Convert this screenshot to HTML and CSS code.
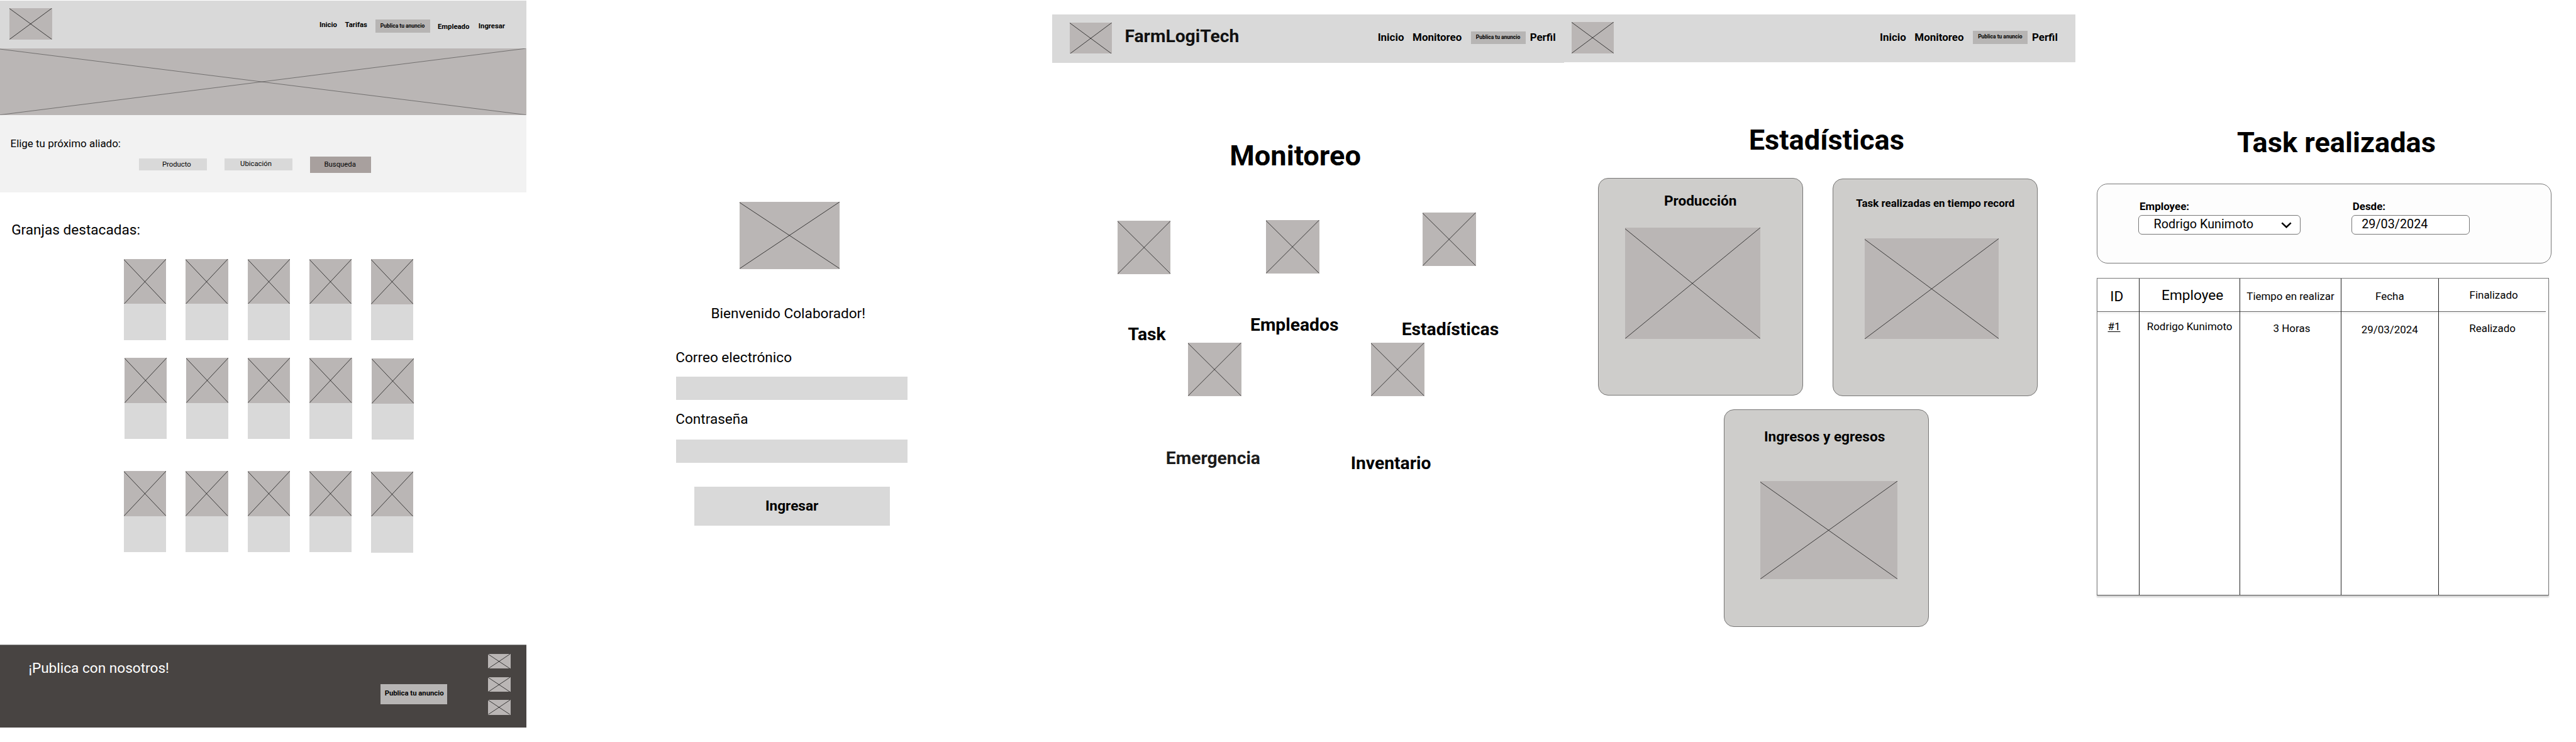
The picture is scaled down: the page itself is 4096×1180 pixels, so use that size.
FILE: index.html
```html
<!DOCTYPE html>
<html lang="es">
<head>
<meta charset="utf-8">
<title>FarmLogiTech</title>
<link rel="stylesheet" href="styles.css">
</head>
<body>
<svg class="defs" aria-hidden="true">
  <symbol id="cross" viewBox="0 0 100 100" preserveAspectRatio="none">
    <path class="cross-line" d="M0 1L100 100M0 100L100 0"/>
  </symbol>
</svg>
<main class="board">

  <section class="frame home">
    <header class="home-header">
      <svg class="ph home-logo"><use href="#cross"/></svg>
      <nav class="home-nav">
        <a class="n-inicio">Inicio</a>
        <a class="n-tarifas">Tarifas</a>
        <a class="publish">Publica tu anuncio</a>
        <a class="n-empleado">Empleado</a>
        <a class="n-ingresar">Ingresar</a>
      </nav>
    </header>
    <svg class="ph hero"><use href="#cross"/></svg>
    <div class="search">
      <p class="search-title">Elige tu próximo aliado:</p>
      <div class="search-row">
        <div class="chip producto">Producto</div>
        <div class="chip ubicacion">Ubicación</div>
        <div class="chip-button">Busqueda</div>
      </div>
    </div>
    <h2 class="farms-title">Granjas destacadas:</h2>
    <div class="farms">
      <div class="farm-row">
        <article class="farm"><svg class="ph"><use href="#cross"/></svg></article>
        <article class="farm"><svg class="ph"><use href="#cross"/></svg></article>
        <article class="farm"><svg class="ph"><use href="#cross"/></svg></article>
        <article class="farm"><svg class="ph"><use href="#cross"/></svg></article>
        <article class="farm"><svg class="ph"><use href="#cross"/></svg></article>
      </div>
      <div class="farm-row second">
        <article class="farm"><svg class="ph"><use href="#cross"/></svg></article>
        <article class="farm"><svg class="ph"><use href="#cross"/></svg></article>
        <article class="farm"><svg class="ph"><use href="#cross"/></svg></article>
        <article class="farm"><svg class="ph"><use href="#cross"/></svg></article>
        <article class="farm"><svg class="ph"><use href="#cross"/></svg></article>
      </div>
      <div class="farm-row third">
        <article class="farm"><svg class="ph"><use href="#cross"/></svg></article>
        <article class="farm"><svg class="ph"><use href="#cross"/></svg></article>
        <article class="farm"><svg class="ph"><use href="#cross"/></svg></article>
        <article class="farm"><svg class="ph"><use href="#cross"/></svg></article>
        <article class="farm"><svg class="ph"><use href="#cross"/></svg></article>
      </div>
    </div>
    <footer class="footer">
      <p class="footer-title">¡Publica con nosotros!</p>
      <div class="footer-button">Publica tu anuncio</div>
      <div class="socials">
        <svg class="ph"><use href="#cross"/></svg>
        <svg class="ph"><use href="#cross"/></svg>
        <svg class="ph"><use href="#cross"/></svg>
      </div>
    </footer>
  </section>

  <section class="frame login">
    <svg class="ph login-image"><use href="#cross"/></svg>
    <p class="welcome">Bienvenido Colaborador!</p>
    <div class="login-form">
      <p class="field-label">Correo electrónico</p>
      <div class="field"></div>
      <p class="field-label password">Contraseña</p>
      <div class="field"></div>
      <div class="login-button">Ingresar</div>
    </div>
  </section>

  <section class="frame monitor">
    <header class="app-header">
      <svg class="ph app-logo"><use href="#cross"/></svg>
      <span class="brand">FarmLogiTech</span>
      <nav class="app-nav">
        <a class="a-inicio">Inicio</a>
        <a class="a-monitoreo">Monitoreo</a>
        <a class="publish">Publica tu anuncio</a>
        <a class="a-perfil">Perfil</a>
      </nav>
    </header>
    <h1 class="monitor-title">Monitoreo</h1>
    <div class="tiles">
      <div class="tile task"><svg class="ph"><use href="#cross"/></svg><span>Task</span></div>
      <div class="tile empleados"><svg class="ph"><use href="#cross"/></svg><span>Empleados</span></div>
      <div class="tile estadisticas"><svg class="ph"><use href="#cross"/></svg><span>Estadísticas</span></div>
    </div>
    <div class="tiles lower">
      <div class="tile emergencia"><svg class="ph"><use href="#cross"/></svg><span>Emergencia</span></div>
      <div class="tile inventario"><svg class="ph"><use href="#cross"/></svg><span>Inventario</span></div>
    </div>
  </section>

  <section class="frame stats">
    <header class="app-header">
      <svg class="ph app-logo"><use href="#cross"/></svg>
      <nav class="app-nav">
        <a class="a-inicio">Inicio</a>
        <a class="a-monitoreo">Monitoreo</a>
        <a class="publish">Publica tu anuncio</a>
        <a class="a-perfil">Perfil</a>
      </nav>
    </header>
    <h1 class="stats-title">Estadísticas</h1>
    <div class="cards">
      <article class="card produccion"><h3>Producción</h3><svg class="ph"><use href="#cross"/></svg></article>
      <article class="card record"><h3>Task realizadas en tiempo record</h3><svg class="ph"><use href="#cross"/></svg></article>
    </div>
    <article class="card ingresos"><h3>Ingresos y egresos</h3><svg class="ph"><use href="#cross"/></svg></article>
  </section>

  <section class="frame tasks">
    <h1 class="tasks-title">Task realizadas</h1>
    <div class="filters">
      <div class="filter">
        <span class="filter-label">Employee:</span>
        <div class="select">Rodrigo Kunimoto
          <svg class="chevron" viewBox="0 0 17 10"><path d="M1.3 1.3L8.5 8.2L15.7 1.3"/></svg>
        </div>
      </div>
      <div class="filter">
        <span class="filter-label">Desde:</span>
        <div class="date">29/03/2024</div>
      </div>
    </div>
    <div class="table">
      <div class="col"><div class="th th-id">ID</div><div class="td td-id">#1</div></div>
      <div class="col"><div class="th th-employee">Employee</div><div class="td">Rodrigo Kunimoto</div></div>
      <div class="col"><div class="th">Tiempo en realizar</div><div class="td td-time">3 Horas</div></div>
      <div class="col"><div class="th">Fecha</div><div class="td td-date">29/03/2024</div></div>
      <div class="col"><div class="th th-final">Finalizado</div><div class="td td-final">Realizado</div></div>
    </div>
  </section>
</main>
</body>
</html>
```
FILE: styles.css
```css
* { box-sizing: border-box; }
body {
  margin: 0;
  background: #fff;
  color: #000;
  font-family: Roboto, "Liberation Sans", sans-serif;
  line-height: 1;
  white-space: nowrap;
}
h1, h2, h3, p { margin: 0; }
svg { display: block; flex: none; }
.defs { display: none; }
.cross-line {
  fill: none;
  stroke: #000;
  stroke-width: 0.7px;
  vector-effect: non-scaling-stroke;
}
.ph { background: #bab6b5; }
.board { display: flex; width: 4096px; height: 1180px; overflow: hidden; }
.frame { display: flex; flex-direction: column; align-items: flex-start; flex: none; height: 1180px; }

.publish {
  display: flex;
  justify-content: center;
  width: 87px;
  height: 20.4px;
  padding-top: 5.2px;
  background: #b7b5b4;
  font-size: 8.47px;
  font-weight: 700;
}

/* Home */
.home { width: 836.5px; padding-top: 0.5px; }
.home-header {
  display: flex;
  width: 100%;
  height: 76.9px;
  padding: 12.6px 0 0 15.1px;
  background: #d9d9d9;
}
.home-logo { width: 67.6px; height: 49.7px; }
.home-nav { display: flex; align-items: flex-start; margin-left: 425.2px; padding-top: 18.4px; font-size: 11.3px; font-weight: 700; }
.n-inicio { width: 40.7px; padding-top: 2.8px; }
.n-tarifas { width: 48px; padding-top: 2.8px; }
.n-empleado { width: 64.8px; margin-left: 12.4px; padding-top: 5.3px; }
.n-ingresar { padding-top: 4.3px; }
.hero { width: 100%; height: 105.7px; }
.hero use { opacity: 0.55; }
.search { width: 100%; height: 122.5px; padding: 36.6px 0 0 16.5px; background: #f2f2f2; }
.search-title { font-size: 16.95px; }
.search-row { display: flex; align-items: center; gap: 28.6px; margin: 12px 0 0 204.5px; font-size: 11.3px; }
.chip { display: flex; justify-content: center; align-items: center; width: 107.6px; height: 18.2px; background: #d9d9d9; }
.producto { padding-left: 12px; }
.ubicacion { padding: 0 8px 1px 0; }
.chip-button { display: flex; justify-content: center; align-items: center; width: 96.7px; height: 25.9px; padding-right: 2px; background: #a8a09e; font-size: 11.3px; }
.farms-title { margin: 49.8px 0 0 18.2px; font-size: 22.6px; font-weight: 400; }
.farms { display: flex; flex-direction: column; gap: 28.8px; margin: 33.7px 0 0 197.2px; }
.farm-row { display: flex; gap: 31.05px; }
.second { margin-left: 0.6px; }
.third { margin-top: 21.7px; }
.farm { width: 67.2px; height: 129px; background: #d9d9d9; }
.farm:last-child { margin-top: 0.6px; margin-bottom: -0.6px; }
.farm .ph { width: 67.2px; height: 71.7px; }
.footer {
  display: flex;
  width: 100%;
  height: 131.9px;
  margin-top: 147px;
  border-top: 1px solid #8d8d8d;
  background: #484442;
}
.footer-title { width: 559.3px; margin: 26.3px 0 0 45.4px; color: #fff; font-size: 22.6px; }
.footer-button { display: flex; justify-content: center; width: 105.9px; height: 31.6px; margin-top: 62px; padding: 9.3px 0 0 2px; background: #b7b5b4; font-size: 11.3px; font-weight: 700; }
.socials { display: flex; flex-direction: column; gap: 13.2px; margin: 14px 0 0 65.9px; }
.socials .ph { width: 35.2px; height: 23.5px; }

/* Login */
.login { width: 836.8px; padding-top: 321.4px; }
.login-image { width: 159.2px; height: 106.2px; margin-left: 339.2px; }
.welcome { margin: 60.6px 0 0 294px; font-size: 22.6px; }
.login-form { width: 368.7px; margin: 47.7px 0 0 238px; }
.field-label { margin-left: -0.3px; font-size: 22.6px; }
.field { height: 37.1px; margin-top: 17.7px; background: #d9d9d9; }
.password { margin-top: 20.6px; }
.password + .field { margin-top: 19.7px; }
.login-button { display: flex; justify-content: center; width: 310.9px; height: 61.7px; margin: 38.6px 0 0 29.2px; padding-top: 19.5px; background: #d9d9d9; font-size: 22.6px; font-weight: 700; }

/* Application header */
.app-header { display: flex; width: 100%; height: 76.6px; padding: 12.4px 0 0 27.7px; background: #d9d9d9; }
.app-logo { width: 66.9px; height: 49.7px; }
.brand { margin: 8px 0 0 20.6px; color: #111; font-size: 28.24px; font-weight: 700; }
.app-nav { display: flex; align-items: flex-start; padding-top: 14px; font-size: 16.95px; font-weight: 700; }
.a-inicio { width: 55.4px; padding-top: 1.7px; }
.a-monitoreo { width: 92.5px; padding-top: 1.7px; }
.a-perfil { margin-left: 7.1px; padding-top: 1.7px; }

/* Monitoring */
.monitor { width: 813.4px; padding-top: 23.2px; }
.monitor .brand { width: 401.6px; }
.monitor .app-nav { margin-left: 0.6px; }
.monitor-title { margin: 125.7px 0 0 282px; font-size: 45.2px; font-weight: 700; }
.tiles { display: flex; align-items: flex-start; height: 215px; margin: 67.8px 0 0 88.5px; }
.tile { display: flex; flex-direction: column; align-items: center; width: 160px; font-size: 28.24px; font-weight: 700; }
.tile .ph { width: 84.6px; height: 84.7px; }
.task { margin: 12.7px 0 0 -22.7px; }
.task span { margin: 82px 0 0 9px; }
.empleados { margin: 11.5px 0 0 76.1px; }
.empleados span { margin: 68.4px 0 0 6px; }
.estadisticas { margin-left: 89.2px; }
.estadisticas span { margin: 87px 0 0 3px; }
.lower { margin: -8.1px 0 0 178.1px; }
.emergencia span { margin: 85.4px 0 0 -5px; color: #1c1c1c; }
.inventario { margin-left: 130.9px; }
.inventario span { margin: 93.2px 0 0 -21.4px; }

/* Statistics */
.stats { width: 813.3px; padding-top: 22.8px; }
.stats .app-header { padding-left: 12.6px; }
.stats .app-nav { margin-left: 422.8px; }
.stats-title { margin: 100.7px 0 0 294px; font-size: 45.2px; font-weight: 700; }
.cards { display: flex; gap: 47.8px; margin: 38.1px 0 0 54.1px; }
.card { display: flex; flex-direction: column; align-items: flex-start; width: 325.8px; height: 345.9px; border: 1px solid #777675; border-radius: 16px; background: #cecdcb; }
.card h3 { align-self: center; font-size: 22.6px; font-weight: 700; }
.produccion h3 { margin-top: 24.7px; }
.produccion .ph { width: 215px; height: 176.5px; margin: 30.8px 0 0 42.2px; }
.record { margin-top: 0.6px; }
.record h3 { margin-top: 30px; font-size: 16.95px; }
.record .ph { width: 213.8px; height: 160px; margin: 47px 0 0 49.2px; }
.ingresos { margin: 21.5px 0 0 254.8px; }
.ingresos h3 { margin: 31.9px 0 0 -6.6px; }
.ingresos .ph { width: 218.1px; height: 155.8px; margin: 58px 0 0 56.5px; }

/* Completed tasks */
.tasks { width: 796px; padding: 204px 0 0 33.9px; }
.tasks-title { margin-left: 223px; font-size: 45.2px; font-weight: 700; }
.filters { display: flex; gap: 81.2px; width: 723.6px; height: 127.7px; margin-top: 42.3px; padding: 27.4px 0 0 65.1px; border: 1px solid #777; border-radius: 17px; background: #fdfdfd; }
.filter-label { display: block; margin-left: 2px; font-size: 16.95px; font-weight: 700; }
.select, .date { display: flex; height: 31.1px; margin-top: 4.8px; padding-top: 4.6px; border: 1px solid #777; border-radius: 6px; background: #fff; font-size: 19.8px; }
.select { width: 257.6px; padding-left: 23.6px; }
.date { width: 187.9px; padding-left: 15.4px; }
.chevron { width: 17px; height: 10px; margin: 6px 12.1px 0 auto; fill: none; stroke: #000; stroke-width: 2.5px; }
.table { display: grid; grid-template-columns: 66.3px 159.9px 160.8px 154.9px 1fr; width: 719.6px; height: 505px; margin-top: 23.2px; border: 1px solid #777; border-bottom-color: #555; box-shadow: 0 3px 2px rgba(0, 0, 0, 0.18); }
.col + .col { border-left: 1px solid #222; }
.th, .td { display: flex; justify-content: center; font-size: 16.95px; }
.th { height: 53px; padding-top: 19.7px; border-bottom: 1px solid #666; box-shadow: 0 3px 2px rgba(0, 0, 0, 0.04); }
.th-id { padding: 17.7px 4.6px 0 0; font-size: 22.6px; }
.th-employee { padding: 15.8px 0 0 9px; font-size: 22.6px; }
.th-final { margin-right: 4px; padding: 17.7px 0 0 4px; }
.td { padding-top: 14.6px; }
.td-id { padding-right: 13px; text-decoration: underline; text-underline-offset: 2px; text-decoration-thickness: 1px; }
.td-time { padding: 17.9px 0 0 4px; }
.td-date { padding-top: 19.2px; }
.td-final { padding: 17.9px 4px 0 0; }
```
